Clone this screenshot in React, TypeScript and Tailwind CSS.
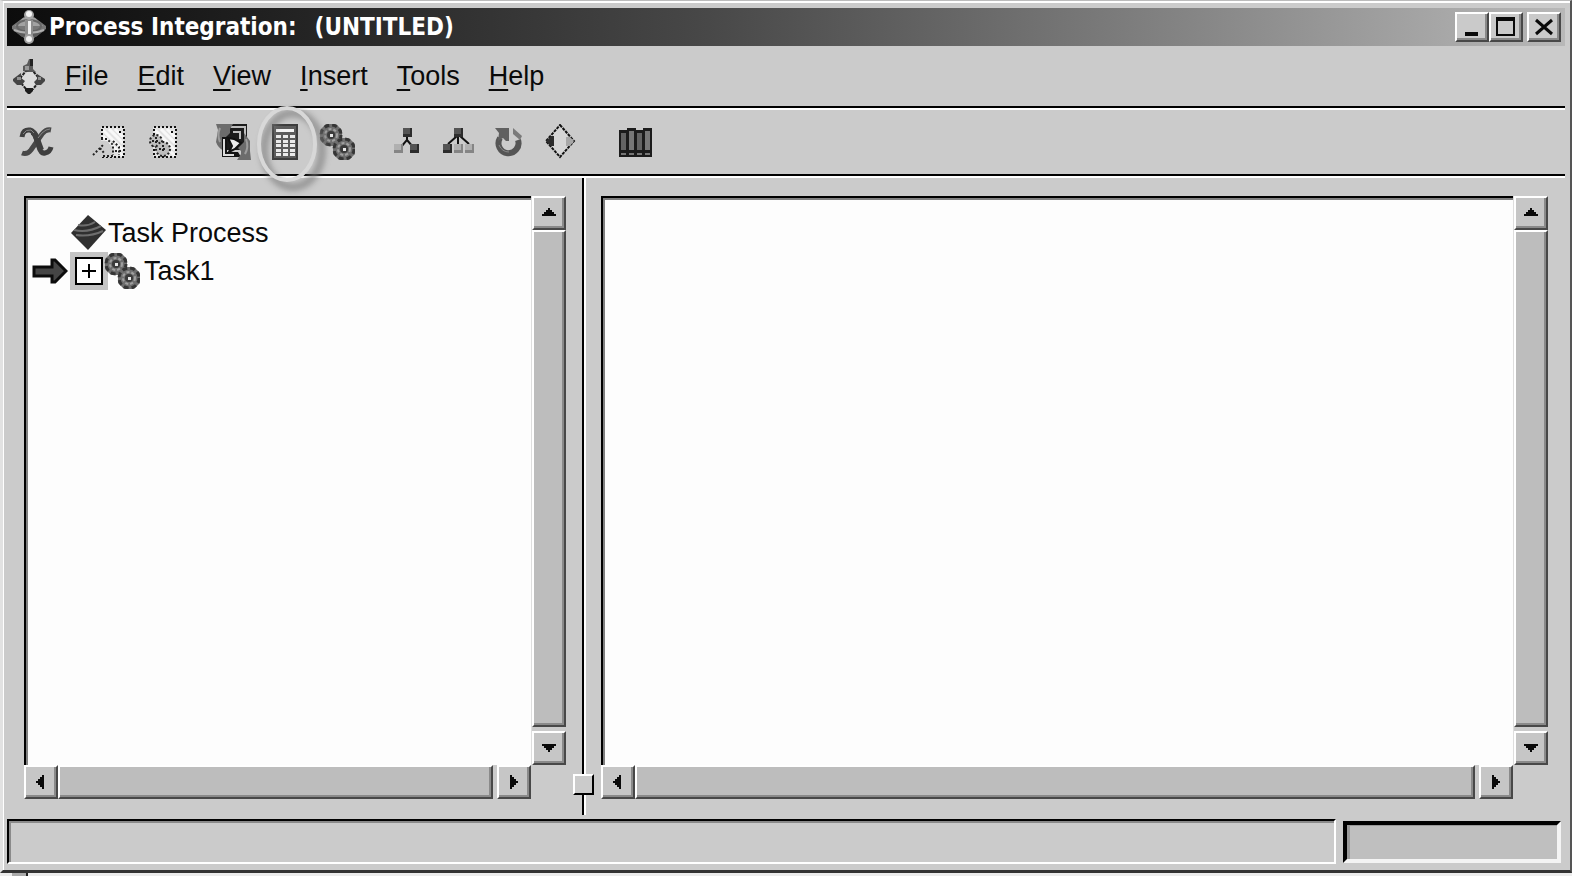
import type { ReactNode } from "react";

const MENUS = ["File", "Edit", "View", "Insert", "Tools", "Help"];

const RAISED =
  "border-2 border-t-white border-l-white border-r-[#484848] border-b-[#484848] shadow-[inset_-2px_-2px_0_#8a8a8a]";

type Pt = [number, number];

function Icon({ children }: { children: ReactNode }) {
  return (
    <svg viewBox="0 0 36 36" className="size-9 shrink-0" aria-hidden="true">
      {children}
    </svg>
  );
}

function LogoIcon() {
  return (
    <Icon>
      <path d="M13 8h10l12 9v3L23 29H13L1 20v-3Z" fill="#777" />
      <path d="M12 9h12l8 8H4Z" fill="#a2a2a2" />
      <path d="M2 21h32l-9 7H11Z" fill="#5c5c5c" />
      <ellipse cx="18" cy="17" rx="12" ry="6" fill="none" stroke="#666" strokeWidth="2" />
      <path d="M3 21q15 6 30 0" fill="none" stroke="#b0b0b0" strokeWidth="2" />
      <path d="M14 11h8v16h-8z" fill="#8d8d8d" />
      <path d="M17 12h3v14h-3z" fill="#efefef" />
      <circle cx="18" cy="6" r="5" fill="#a5a5a5" />
      <circle cx="18" cy="5" r="3" fill="#f5f5f5" />
      <circle cx="18" cy="30" r="5" fill="#a0a0a0" />
      <circle cx="18" cy="30" r="3" fill="#f0f0f0" />
    </Icon>
  );
}

function DocIcon() {
  return (
    <Icon>
      <path d="M15 13h7l5 6v6l-5 6h-7l-5-6v-6Z" fill="#dcdcdc" stroke="#222" strokeWidth="2" strokeDasharray="3 1" />
      <path d="M18 1h4v10l3 3h-7l-6-1v-5l4-2Z" fill="#5a5a5a" />
      <path d="M19 1h3v7h-3z" fill="#222" />
      <path d="M14 8h4v4h-4z" fill="#999" />
      <path d="M10 15v5l4 3-3 4H6l-4-4v-2Z" fill="#444" />
      <path d="M26 16l8 5v2l-4 4h-5l-2-3 3-3Z" fill="#444" />
      <path d="M6 19h4v3H6zM27 19h3v3h-3z" fill="#929292" />
      <path d="M14 30h8v3l-3 3h-2l-3-3Z" fill="#1c1c1c" />
    </Icon>
  );
}

function VariableIcon() {
  return (
    <Icon>
      <path d="M3 13q1-8 8-7 4 1 6 8l3 9q2 7 6 6 5-1 6-6" fill="none" stroke="#3f3f3f" strokeWidth="5" />
      <path d="M32 6q-5-1-9 4L12 26q-4 5-9 3" fill="none" stroke="#484848" strokeWidth="5" />
      <path d="M12 8q4 0 6 7l4 11" fill="none" stroke="#3f3f3f" strokeWidth="6" />
      <path d="M4 10q3-5 8-4l3 3M31 5q-4 0-8 4l-4 5" fill="none" stroke="#868686" strokeWidth="1" />
    </Icon>
  );
}

function PageIcon({ gears }: { gears?: boolean }) {
  return (
    <Icon>
      <path d="M10 3h23v30H10Z" fill="#e2e2e2" />
      <path d="M12 6l20 20M18 5l14 14M24 5l8 8M12 12l20 20" stroke="#f8f8f8" strokeWidth="3" />
      <path d="M11 3h22v30H11Z" fill="none" stroke="#111" strokeWidth="2" strokeDasharray="2 2" />
      <path d="M28 7h2v2h-2z" fill="#111" />
      {gears ? (
        <g stroke="#222" strokeWidth="2" strokeDasharray="2 2">
          <circle cx="13" cy="17" r="6" fill="#bdbdbd" />
          <circle cx="20" cy="25" r="7" fill="#bdbdbd" />
          <path d="M9 17h8M13 13v8M16 25h8M20 21v8" />
        </g>
      ) : (
        <>
          <path d="M8 17h8l7 8-3 8H10V23Z" fill="#cdcdcd" />
          <path
            d="M10 15h6l6 6v10M2 31 13 20M9 24l4 5M22 17l6 6v8M24 27h6M12 32h10"
            fill="none"
            stroke="#222"
            strokeWidth="2"
            strokeDasharray="2 2"
          />
        </>
      )}
    </Icon>
  );
}

function UpdateIcon() {
  return (
    <Icon>
      <path d="M14 0h18v26H10V6Z" fill="#1c1c1c" />
      <path d="M16 3h14v15M18 8h7v7" fill="none" stroke="#bdbdbd" strokeWidth="2" />
      <path d="M1 0h17l-3 5v4l-6 6v12q-6-3-8-9l2-12Z" fill="#6c6c6c" />
      <path d="M7 13v20h19l-3-5H12V13Z" fill="#141414" />
      <path d="M9 15v16h10" fill="none" stroke="#ddd" strokeWidth="2" />
      <path d="M13 14l6 1 7 4-6 6-6 3 3-6Z" fill="#ececec" stroke="#111" strokeWidth="2" />
      <path d="M29 9l6 8v10l1 9H22l4-6v-3l-3-3 6-6Z" fill="#6c6c6c" />
      <path d="M5 4q-3 7 0 14M31 15q3 8-1 15" fill="none" stroke="#9c9c9c" strokeWidth="2" />
    </Icon>
  );
}

const KEY_ROWS = [11, 16, 20, 25, 29];
const KEY_COLS = [9, 16, 23];

function CalculatorIcon() {
  return (
    <Icon>
      <path d="M5 0h26v36H5z" fill="#3c3c3c" />
      <path d="M7 2h22v32H7z" fill="#5c5c5c" />
      <path d="M9 5h18v3H9z" fill="#f4f4f4" />
      {KEY_ROWS.map((y) =>
        KEY_COLS.map((x) => (
          <rect key={`${x}-${y}`} x={x} y={y} width="5" height="3" fill="#eaeaea" />
        )),
      )}
    </Icon>
  );
}

function Gear({ at: [x, y] }: { at: Pt }) {
  return (
    <g transform={`translate(${x} ${y})`}>
      <path d="M-5-11H5L11-5V5L5 11H-5L-11 5V-5Z" fill="#6e6e6e" />
      <circle r="10" fill="none" stroke="#353535" strokeWidth="3" strokeDasharray="5 3" />
      <circle r="6" fill="none" stroke="#a0a0a0" strokeWidth="2" strokeDasharray="3 2" />
      <circle r="4" fill="#3a3a3a" />
      <path d="M-1-1h3v3h-3z" fill="#e8e8e8" />
    </g>
  );
}

function GearsIcon() {
  return (
    <Icon>
      <Gear at={[12, 11]} />
      <Gear at={[25, 25]} />
    </Icon>
  );
}

function Block({ at: [x, y], light }: { at: Pt; light?: boolean }) {
  return (
    <>
      <rect x={x} y={y} width="9" height="9" fill={light ? "#858585" : "#2c2c2c"} />
      <rect x={x} y={y} width="7" height="6" fill={light ? "#b0b0b0" : "#545454"} />
    </>
  );
}

function SequenceIcon() {
  return (
    <Icon>
      <path d="M18 12v4l-6 7M18 16l6 7" fill="none" stroke="#111" strokeWidth="2" />
      <Block at={[14, 4]} />
      <Block at={[5, 20]} light />
      <Block at={[21, 20]} />
    </Icon>
  );
}

function BranchIcon() {
  return (
    <Icon>
      <path d="M18 12v8M17 12l-9 8M20 12l9 8" fill="none" stroke="#111" strokeWidth="2" />
      <Block at={[14, 4]} />
      <Block at={[3, 20]} />
      <Block at={[14, 20]} light />
      <Block at={[25, 20]} light />
    </Icon>
  );
}

function LoopIcon() {
  return (
    <Icon>
      <path d="M9 14a10 10 0 1 0 18 2" fill="none" stroke="#555" strokeWidth="6" />
      <path d="M4 4h14v13h-3l-3-3-5 3 1-8Z" fill="#606060" />
      <path d="M22 4l9 8-2 4-7-6Z" fill="#7a7a7a" />
      <path d="M8 21q3 7 10 7" fill="none" stroke="#888" strokeWidth="1" />
    </Icon>
  );
}

function DecisionIcon() {
  return (
    <Icon>
      <path d="M18 1 32 17 18 33 4 17Z" fill="#d6d6d6" stroke="#111" strokeWidth="2" strokeDasharray="3 1" />
      <path d="M4 17l5-5h3v10H8Z" fill="#2c2c2c" />
      <path d="M24 13h4l4 4-4 5h-4z" fill="#a8a8a8" />
    </Icon>
  );
}

const BOOKS: Pt[] = [
  [3, 6],
  [11, 4],
  [19, 6],
  [27, 4],
];

function LibraryIcon() {
  return (
    <Icon>
      {BOOKS.map(([x, y], i) => (
        <g key={x}>
          <rect x={x} y={y} width="9" height={33 - y} fill="#1c1c1c" />
          <rect x={x + 2} y={y + 3} width="5" height={23 - y} fill={i % 2 ? "#777" : "#636363"} />
          <rect x={x + 2} y="29" width="5" height="2" fill="#777" />
        </g>
      ))}
    </Icon>
  );
}

function ProcessIcon() {
  return (
    <Icon>
      <path d="M18 0 36 15 18 35 1 18Z" fill="#303030" />
      <path d="M8 10q9 2 17-3M4 15q14 3 27-4M6 20q14 2 27-4" fill="none" stroke="#6e6e6e" strokeWidth="2" />
    </Icon>
  );
}

function Spotlight() {
  return (
    <svg
      viewBox="0 0 90 110"
      className="pointer-events-none absolute -top-5 -left-4 z-10 h-[110px] w-[90px]"
      aria-hidden="true"
    >
      <defs>
        <filter id="soft" x="-20%" y="-20%" width="140%" height="140%">
          <feGaussianBlur stdDeviation="3" />
        </filter>
      </defs>
      <ellipse cx="42" cy="46" rx="29" ry="37" fill="none" stroke="#777" strokeWidth="7" opacity="0.7" filter="url(#soft)" />
      <ellipse cx="36" cy="40" rx="28" ry="36" fill="none" stroke="#d8d8d8" strokeWidth="4" />
    </svg>
  );
}

function ToolButton({ label, children }: { label: string; children: ReactNode }) {
  return (
    <button type="button" aria-label={label} title={label} className="relative block size-9">
      {children}
    </button>
  );
}

const ARROWS = {
  up: "M9 5h2v2h2v2h2v2h2v2H3v-2h2V9h2V7h2Z",
  down: "M3 6h14v2h-2v2h-2v2h-2v2H9v-2H7v-2H5V8H3Z",
  left: "M13 3v14h-2v-2H9v-2H7v-2H5V9h2V7h2V5h2V3Z",
  right: "M6 3h2v2h2v2h2v2h2v2h-2v2h-2v2H8v2H6Z",
};

function ArrowButton({ dir }: { dir: keyof typeof ARROWS }) {
  return (
    <button
      type="button"
      aria-label={`Scroll ${dir}`}
      className={`flex size-[34px] shrink-0 items-center justify-center bg-[#c6c6c6] ${RAISED}`}
    >
      <svg viewBox="0 0 20 20" className="size-5" aria-hidden="true">
        <path d={ARROWS[dir]} fill="#0a0a0a" />
      </svg>
    </button>
  );
}

function ScrollPane({ label, children }: { label: string; children?: ReactNode }) {
  return (
    <section
      aria-label={label}
      className="grid min-w-0 flex-1 grid-cols-[minmax(0,1fr)_35px] grid-rows-[minmax(0,1fr)_34px]"
    >
      <div className="border-t-2 border-l-2 border-black bg-[#fdfdfd] shadow-[inset_2px_2px_0_#808080]">
        {children}
      </div>
      <div className="flex flex-col border-l border-[#dedede]">
        <ArrowButton dir="up" />
        <div className={`mb-1 flex-1 bg-[#bdbdbd] ${RAISED}`} />
        <ArrowButton dir="down" />
      </div>
      <div className="flex">
        <ArrowButton dir="left" />
        <div className={`mr-1 flex-1 bg-[#bdbdbd] ${RAISED}`} />
        <ArrowButton dir="right" />
      </div>
    </section>
  );
}

function CaptionButton({ label, children }: { label: string; children: ReactNode }) {
  return (
    <button
      type="button"
      aria-label={label}
      className={`flex h-[30px] w-[34px] items-center justify-center bg-[#cacaca] ${RAISED}`}
    >
      <svg viewBox="0 0 22 22" className="size-[22px]" fill="none" stroke="#0a0a0a" aria-hidden="true">
        {children}
      </svg>
    </button>
  );
}

function TitleBar() {
  return (
    <header className="flex h-[38px] items-center bg-linear-to-r from-[#0c0c0c] via-[#484848] via-45% to-[#b8b8b8] pr-1 pl-1">
      <LogoIcon />
      <h1 className="ml-0.5 flex flex-1 gap-[18px] font-['DejaVu_Sans_Condensed','DejaVu_Sans',sans-serif] text-[24px] leading-8 font-bold text-white">
        <span>Process Integration:</span>
        <span>(UNTITLED)</span>
      </h1>
      <div className="flex">
        <CaptionButton label="Minimize">
          <path d="M4 18h13" strokeWidth="4" />
        </CaptionButton>
        <CaptionButton label="Maximize">
          <path d="M1 3h19" strokeWidth="4" />
          <path d="M2 3v16h17V3" strokeWidth="2" />
        </CaptionButton>
        <div className="w-1" />
        <CaptionButton label="Close">
          <path d="M3 4l16 14M19 4L3 18" strokeWidth="3" />
        </CaptionButton>
      </div>
    </header>
  );
}

function MenuBar() {
  return (
    <nav className="flex h-[62px] items-center border-b-2 border-black pl-1">
      <DocIcon />
      <div className="ml-[18px] flex gap-[29px]">
        {MENUS.map((name) => (
          <button key={name} type="button" className="leading-8">
            <span className="underline decoration-2 underline-offset-4">{name[0]}</span>
            {name.slice(1)}
          </button>
        ))}
      </div>
    </nav>
  );
}

function Toolbar() {
  return (
    <div role="toolbar" className="flex h-[68px] items-center border-t-2 border-b-2 border-t-white border-b-black pl-3">
      <ToolButton label="Variables"><VariableIcon /></ToolButton>
      <div className="ml-9 flex gap-4">
        <ToolButton label="Open page"><PageIcon /></ToolButton>
        <ToolButton label="Page settings"><PageIcon gears /></ToolButton>
      </div>
      <div className="ml-9 flex gap-4">
        <ToolButton label="Update"><UpdateIcon /></ToolButton>
        <ToolButton label="Calculation">
          <CalculatorIcon />
          <Spotlight />
        </ToolButton>
        <ToolButton label="Task"><GearsIcon /></ToolButton>
      </div>
      <div className="ml-[34px] flex gap-[15px]">
        <ToolButton label="Sequence"><SequenceIcon /></ToolButton>
        <ToolButton label="Branch"><BranchIcon /></ToolButton>
        <ToolButton label="Loop"><LoopIcon /></ToolButton>
        <ToolButton label="Decision"><DecisionIcon /></ToolButton>
      </div>
      <div className="ml-[38px]">
        <ToolButton label="Library"><LibraryIcon /></ToolButton>
      </div>
    </div>
  );
}

function TaskTree() {
  return (
    <ul className="pt-4 pl-1.5">
      <li className="flex h-[38px] items-center pl-[38px]">
        <ProcessIcon />
        <span className="ml-0.5">Task Process</span>
      </li>
      <li className="flex h-[38px] items-center">
        <svg viewBox="0 0 36 26" className="mr-0.5 h-[26px] w-9" aria-hidden="true">
          <path d="M2 9h18V2h3l11 11-11 11h-3v-6H2Z" fill="#454545" stroke="#0c0c0c" strokeWidth="3" />
        </svg>
        <button
          type="button"
          aria-label="Expand Task1"
          className="flex h-[38px] w-[38px] items-center justify-center bg-[#c4c4c4]"
        >
          <svg viewBox="0 0 28 28" className="size-7" aria-hidden="true">
            <path d="M1 1h26v26H1z" fill="#fff" stroke="#000" strokeWidth="2" />
            <path d="M7 14h14M14 7v14" stroke="#000" strokeWidth="2" />
          </svg>
        </button>
        <div className="-ml-1">
          <GearsIcon />
        </div>
        <span className="ml-1">Task1</span>
      </li>
    </ul>
  );
}

export default function App() {
  return (
    <div className="flex min-h-screen flex-col bg-[#ececec] font-['Liberation_Sans',Arial,sans-serif] text-[27px] text-[#0a0a0a]">
      <div className="flex flex-1 flex-col border-t border-r-2 border-b-[3px] border-l-[3px] border-t-[#bbb] border-r-[#555] border-b-[#333] border-l-[#e2e2e2] bg-[#cbcbcb]">
        <div className="flex flex-1 flex-col border-t-2 border-l border-white pt-[5px] pr-[5px] pl-[3px]">
          <TitleBar />
          <MenuBar />
          <Toolbar />
          <main className="flex flex-1 border-t-2 border-white px-[17px]">
            <div className="flex w-[542px] shrink-0 pt-[18px] pb-5">
              <ScrollPane label="Tasks">
                <TaskTree />
              </ScrollPane>
            </div>
            <div className="flex w-[35px] shrink-0 flex-col items-center pb-1" role="separator">
              <div className="w-1 flex-1 border-l-2 border-l-black bg-white" />
              <div className="size-[21px] border-2 border-t-white border-r-black border-b-black border-l-white bg-[#cbcbcb]" />
              <div className="h-5 w-1 border-l-2 border-l-black bg-white" />
            </div>
            <div className="flex min-w-0 flex-1 pt-[18px] pb-5">
              <ScrollPane label="Details" />
            </div>
          </main>
          <footer className="mb-1.5 flex items-center gap-[7px] pr-1">
            <div className="h-[45px] flex-1 border-2 border-t-black border-r-white border-b-white border-l-black shadow-[inset_2px_2px_0_#8a8a8a]" />
            <div className="h-[42px] w-[218px] border-4 border-t-black border-r-[#f4f4f4] border-b-[#f4f4f4] border-l-black bg-[#bfbfbf] shadow-[inset_3px_1px_0_#999]" />
          </footer>
        </div>
      </div>
      <div className="flex h-[3px] pl-3">
        <div className="w-4 border-r-2 border-[#222] bg-[#aaa]" />
      </div>
    </div>
  );
}
